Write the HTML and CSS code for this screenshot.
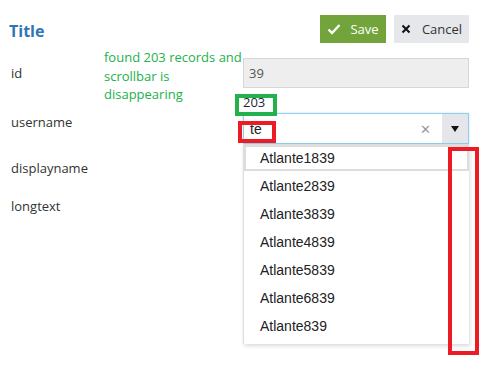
FILE: index.html
```html
<!DOCTYPE html>
<html lang="en">
  <head>
    <meta charset="utf-8">
    <title>Title</title>
    <link rel="stylesheet" href="styles.css">
  </head>
  <body>
    <div class="page">
      <header class="topbar">
        <h1 class="title">Title</h1>
        <div class="actions">
          <a class="btn btnSave">
            <svg width="14" height="12" viewBox="0 0 14 12"><path d="M1.5 6.5 L5 10 L12.5 2" fill="none" stroke="#fff" stroke-width="2.4"/></svg>
            Save
          </a>
          <a class="btn btnCancel">
            <svg width="10" height="10" viewBox="0 0 10 10"><path d="M1.5 1.5 L8.5 8.5 M8.5 1.5 L1.5 8.5" stroke="#111" stroke-width="2"/></svg>
            Cancel
          </a>
        </div>
      </header>

      <div class="note">found 203 records and scrollbar is disappearing</div>

      <div class="form">
        <label class="rowLabel rowId">id</label>
        <div class="field rowId"><input class="textInput" value="39" disabled></div>

        <div class="count">203</div>

        <label class="rowLabel rowUser">username</label>
        <div class="field combo rowUser">
          <div class="comboBox">
            <span class="comboValue">te</span>
            <span class="comboClear">&#x2715;</span>
            <span class="comboToggle"><span class="arrow"></span></span>
          </div>
          <ul class="dropdown">
            <li class="active">Atlante1839</li>
            <li>Atlante2839</li>
            <li>Atlante3839</li>
            <li>Atlante4839</li>
            <li>Atlante5839</li>
            <li>Atlante6839</li>
            <li>Atlante839</li>
          </ul>
        </div>

        <label class="rowLabel rowDisplay">displayname</label>
        <label class="rowLabel rowLong">longtext</label>
      </div>
    </div>

    <div class="mark markCount"></div>
    <div class="mark markValue"></div>
    <div class="mark markScroll"></div>
  </body>
</html>
```

FILE: styles.css
```css
body {
  margin: 0;
  background: #fff;
  font-family: "Open Sans", sans-serif;
  font-size: 13px;
  color: #333;
}
.page {
  position: relative;
  box-sizing: border-box;
  min-height: 381px;
  padding: 15px 19px 0 9px;
}
.topbar {
  display: flex;
  justify-content: space-between;
  align-items: center;
  height: 28px;
}
.title {
  margin: 4px 0 0 0;
  font-size: 16px;
  font-weight: bold;
  color: #2e75b6;
}
.actions {
  display: flex;
  gap: 8px;
}
.btn {
  display: flex;
  align-items: center;
  justify-content: center;
  gap: 9px;
  height: 28px;
  box-sizing: border-box;
  font-size: 13px;
}
.btnSave {
  width: 66px;
  background: #72a43b;
  color: #fff;
}
.btnCancel {
  width: 75px;
  background: #e5e7eb;
  color: #333;
  gap: 11px;
}
.note {
  position: absolute;
  left: 104px;
  top: 48px;
  width: 145px;
  color: #22b14c;
  font-size: 13px;
  line-height: 18.5px;
}
.form {
  display: grid;
  grid-template-columns: 232px 226px;
  margin-top: 15px;
  padding-left: 2px;
}
.rowLabel {
  grid-column: 1;
  line-height: 18px;
}
.field {
  grid-column: 2;
}
.rowId.rowLabel {
  line-height: 30px;
}
.textInput {
  box-sizing: border-box;
  width: 100%;
  height: 30px;
  padding: 0 5px;
  border: 1px solid #d7d7d7;
  background: #eee;
  color: #555;
  font: inherit;
  font-size: 13px;
}
.count {
  grid-column: 2;
  height: 25px;
  padding-top: 5px;
  box-sizing: border-box;
  line-height: 18px;
  font-size: 13px;
  color: #1f1f3a;
}
.rowUser.rowLabel {
  grid-row: 3;
}
.combo {
  grid-row: 3;
  position: relative;
  z-index: 1;
}
.comboBox {
  display: flex;
  align-items: center;
  height: 31px;
  box-sizing: border-box;
  border: 1px solid #8fd0ec;
  box-shadow: 0 0 2px #b9e3f4;
}
.comboValue {
  flex: 1;
  padding-left: 6px;
  font-family: "Liberation Sans", sans-serif;
  font-size: 14px;
  color: #222;
}
.comboClear {
  width: 22px;
  color: #999;
  font-size: 13px;
}
.comboToggle {
  display: flex;
  align-items: center;
  justify-content: center;
  width: 26px;
  height: 100%;
  background: #e4e6ea;
}
.arrow {
  border-left: 4px solid transparent;
  border-right: 4px solid transparent;
  border-top: 6px solid #111;
}
.dropdown {
  position: absolute;
  top: 31px;
  left: 0;
  width: 225px;
  margin: 0;
  padding: 0 0 4px 0;
  list-style: none;
  background: #fff;
  border-left: 1px solid #ddd;
  box-shadow: 1px 2px 4px rgba(0, 0, 0, 0.15);
  font-family: "Liberation Sans", sans-serif;
  font-size: 14px;
  color: #222;
}
.dropdown li {
  box-sizing: border-box;
  height: 28px;
  line-height: 28px;
  padding-left: 16px;
}
.dropdown li.active {
  height: 27px;
  line-height: 22px;
  margin-bottom: 1px;
  padding-left: 14px;
  border: 2px solid #ddd;
  border-top-width: 3px;
}
.rowDisplay {
  grid-row: 4;
  margin-top: 15px;
}
.rowLong {
  grid-row: 5;
  margin-top: 20px;
}
.mark {
  position: absolute;
  z-index: 2;
  box-sizing: border-box;
  border: 4px solid #ed1c24;
}
.markCount {
  left: 235px;
  top: 94px;
  width: 42px;
  height: 22px;
  border-color: #22b14c;
}
.markValue {
  left: 238px;
  top: 121px;
  width: 38px;
  height: 22px;
}
.markScroll {
  left: 448px;
  top: 147px;
  width: 31px;
  height: 208px;
}
```
